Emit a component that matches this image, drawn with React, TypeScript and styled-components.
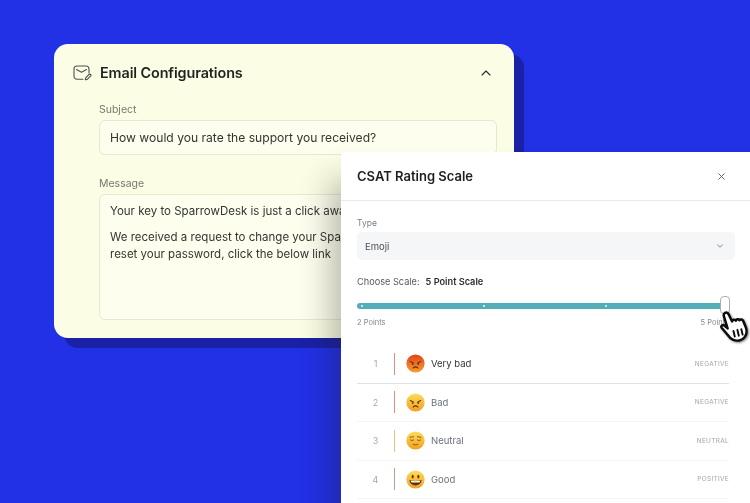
import { createGlobalStyle, styled } from "styled-components";
import { ChevronDown, ChevronUp, X } from "lucide-react";

const GlobalStyle = createGlobalStyle`
  html, body {
    margin: 0;
    padding: 0;
    background: #2230e6;
    font-family: "Inter", "Noto Sans", sans-serif;
  }
`;

const Page = styled.div`
  position: relative;
  width: 750px;
  height: 503px;
  overflow: hidden;
  padding: 44px 0 0 54px;
  box-sizing: border-box;
  background: #2230e6;
  filter: blur(0.35px);
`;

const ConfigCard = styled.section`
  width: 460px;
  height: 294px;
  box-sizing: border-box;
  padding: 20px 0 0 19px;
  background: #fbfde4;
  border-radius: 14px;
  box-shadow: 10px 10px 0 #1a21a6;
`;

const CardHeader = styled.header`
  display: flex;
  align-items: center;
  gap: 8px;
  height: 18px;
  padding-right: 20px;
  color: #2b2f2a;
`;

const CardTitle = styled.h2`
  flex: 1;
  margin: 0;
  font-size: 14.4px;
  line-height: 18px;
  font-weight: 600;
  letter-spacing: -0.1px;
  color: #1f2420;
`;

const Fields = styled.div`
  display: flex;
  flex-direction: column;
  padding: 21px 0 0 26px;
  margin-right: 17px;
`;

const FieldLabel = styled.label`
  font-size: 10.5px;
  line-height: 14px;
  color: #77796f;
  margin-bottom: 3px;
`;

const SubjectBox = styled.div`
  height: 35px;
  box-sizing: border-box;
  padding: 0 10px;
  margin-bottom: 22px;
  display: flex;
  align-items: center;
  background: #fdfeee;
  border: 1px solid #e6e8d2;
  border-radius: 6px;
  font-size: 12.1px;
  color: #33362f;
  white-space: nowrap;
`;

const MessageBox = styled.div`
  height: 126px;
  box-sizing: border-box;
  padding: 8px 10px;
  background: #fdfeee;
  border: 1px solid #e6e8d2;
  border-radius: 6px;
  font-size: 11.5px;
  line-height: 17.5px;
  color: #33362f;
  white-space: nowrap;
  overflow: hidden;
`;

const MessageLine = styled.p`
  margin: 0 0 8px;
`;

const Modal = styled.section`
  position: absolute;
  left: 341px;
  top: 152px;
  width: 440px;
  height: 380px;
  background: #fff;
  border-radius: 4px 0 0 0;
  box-shadow: -16px 22px 30px -6px rgba(30, 30, 20, 0.3);
`;

const ModalHeader = styled.header`
  height: 49px;
  box-sizing: border-box;
  display: flex;
  align-items: center;
  justify-content: space-between;
  padding: 0 54px 0 16px;
  border-bottom: 1px solid #e9eaec;
  color: #4d5058;
`;

const ModalTitle = styled.h2`
  margin: 0;
  font-size: 13px;
  font-weight: 600;
  color: #1d1f24;
`;

const ModalBody = styled.div`
  width: 378px;
  padding: 16px 0 0 16px;
`;

const TypeLabel = styled.div`
  font-size: 8.5px;
  line-height: 12px;
  color: #7a7d84;
  margin-bottom: 3px;
`;

const SelectBox = styled.div`
  height: 28px;
  box-sizing: border-box;
  display: flex;
  align-items: center;
  justify-content: space-between;
  padding: 0 10px 0 8px;
  background: #f5f6f7;
  border-radius: 5px;
  font-size: 9.5px;
  color: #4b4e55;
`;

const ScaleRow = styled.div`
  display: flex;
  gap: 6px;
  margin-top: 16px;
  font-size: 9.2px;
  line-height: 12px;
  color: #55585f;
`;

const ScaleValue = styled.strong`
  font-weight: 600;
  color: #2b2d33;
`;

const SliderTrack = styled.div`
  position: relative;
  width: 368px;
  height: 6px;
  margin-top: 15px;
  display: flex;
  align-items: center;
  gap: 120px;
  padding-left: 4px;
  box-sizing: border-box;
  background: #54aeb8;
  border-radius: 3px;
`;

const TrackTick = styled.span`
  width: 2px;
  height: 2px;
  border-radius: 50%;
  background: #e8fbfd;
`;

const SliderThumb = styled.span`
  position: absolute;
  right: -5px;
  top: -7px;
  width: 10px;
  height: 18px;
  background: #fff;
  border: 1px solid #a9adb3;
  border-radius: 4px;
  box-sizing: border-box;
`;

const ScaleEnds = styled.div`
  display: flex;
  justify-content: space-between;
  width: 372px;
  margin-top: 8px;
  font-size: 7.5px;
  line-height: 11px;
  color: #84878d;
`;

const CursorHand = styled.svg`
  position: absolute;
  left: 375px;
  top: 157px;
  filter: drop-shadow(1px 1px 1px rgba(0, 0, 0, 0.5));
`;

const RatingList = styled.div`
  width: 372px;
  margin: 17px 0 0 16px;
`;

const RatingRow = styled.div<{ $active?: boolean }>`
  height: 38.5px;
  box-sizing: border-box;
  display: flex;
  align-items: center;
  border-bottom: ${(p) => (p.$active ? "1.5px solid #dfe1e4" : "1px solid #f5f5f6")};
  color: ${(p) => (p.$active ? "#33353b" : "#6d7280")};
`;

const RatingIndex = styled.span`
  width: 37px;
  text-align: center;
  font-size: 9px;
  color: #a3a6ab;
`;

const Bar = styled.span<{ $color: string }>`
  width: 1px;
  height: 22px;
  margin-right: 11px;
  background: ${(p) => p.$color};
`;

const RatingName = styled.span`
  flex: 1;
  margin-left: 6px;
  font-size: 9.5px;
`;

const Sentiment = styled.span`
  font-size: 6.5px;
  font-weight: 400;
  letter-spacing: 0.3px;
  color: #a2a5aa;
`;

function MailEditIcon() {
  return (
    <svg width="19" height="16" viewBox="0 0 19 16" fill="none" stroke="#4d5350" strokeWidth="1.1" strokeLinecap="round" strokeLinejoin="round">
      <path d="M10 14.2H4a3 3 0 0 1-3-3V4a3 3 0 0 1 3-3h9a3 3 0 0 1 3 3v4" />
      <path d="M3.5 4.5 8.5 7.2l5-2.7" />
      <path d="m12.3 14.8.4-2 3.3-3.3a1.1 1.1 0 0 1 1.6 1.6l-3.3 3.3z" />
    </svg>
  );
}

function Face({ kind }: { kind: "veryBad" | "bad" | "neutral" | "good" }) {
  const id = `face-${kind}`;
  const top = kind === "veryBad" ? "#e2401a" : "#fcdc5c";
  const bottom = kind === "veryBad" ? "#f7a02e" : "#f2a01e";
  return (
    <svg width="19" height="19" viewBox="0 0 20 20">
      <defs>
        <linearGradient id={id} x1="0" y1="0" x2="0" y2="1">
          <stop offset="0" stopColor={top} />
          <stop offset="1" stopColor={bottom} />
        </linearGradient>
      </defs>
      <circle cx="10" cy="10" r="9.6" fill={`url(#${id})`} />
      {(kind === "veryBad" || kind === "bad") && (
        <g fill="none" stroke="#5a2c10" strokeLinecap="round">
          <path d="M4.5 8 8 9.6M15.5 8 12 9.6" strokeWidth="1.1" />
          <circle cx="7" cy="10.6" r="0.9" fill="#5a2c10" stroke="none" />
          <circle cx="13" cy="10.6" r="0.9" fill="#5a2c10" stroke="none" />
          <path d="M7.4 14.8c1.4-1.3 3.8-1.3 5.2 0" strokeWidth="1.1" />
        </g>
      )}
      {kind === "neutral" && (
        <g fill="none" stroke="#7a4a12" strokeLinecap="round" strokeWidth="0.9">
          <path d="M4.2 6.6 8 6M15.8 6.6 12 6" />
          <path d="M4.6 9.4c1 .8 2.4.8 3.4 0M12 9.4c1 .8 2.4.8 3.4 0" />
          <path d="M7.6 14c1.6.8 3.2.8 4.8 0" />
        </g>
      )}
      {kind === "good" && (
        <g>
          <ellipse cx="7" cy="7" rx="1.1" ry="1.9" fill="#5a3410" />
          <ellipse cx="13" cy="7" rx="1.1" ry="1.9" fill="#5a3410" />
          <path d="M3.6 10.6c4 1.2 8.8 1.2 12.8 0-.3 3.6-3 5.6-6.4 5.6s-6.1-2-6.4-5.6z" fill="#5a3410" />
          <path d="M5 11.2c3.2.7 6.8.7 10 0l-.4 1.6c-3 .6-6.2.6-9.2 0z" fill="#fff" />
        </g>
      )}
    </svg>
  );
}

const ratings = [
  { n: 1, name: "Very bad", kind: "veryBad", color: "#e0907a", tone: "NEGATIVE" },
  { n: 2, name: "Bad", kind: "bad", color: "#e0907a", tone: "NEGATIVE" },
  { n: 3, name: "Neutral", kind: "neutral", color: "#eec27e", tone: "NEUTRAL" },
  { n: 4, name: "Good", kind: "good", color: "#8fb98a", tone: "POSITIVE" },
] as const;

export default function App() {
  return (
    <Page>
      <GlobalStyle />
      <ConfigCard>
        <CardHeader>
          <MailEditIcon />
          <CardTitle>Email Configurations</CardTitle>
          <ChevronUp size={16} strokeWidth={1.7} />
        </CardHeader>
        <Fields>
          <FieldLabel>Subject</FieldLabel>
          <SubjectBox>How would you rate the support you received?</SubjectBox>
          <FieldLabel>Message</FieldLabel>
          <MessageBox>
            <MessageLine>Your key to SparrowDesk is just a click away</MessageLine>
            <div>We received a request to change your SparrowDesk password. To</div>
            <div>reset your password, click the below link</div>
          </MessageBox>
        </Fields>
      </ConfigCard>
      <Modal>
        <ModalHeader>
          <ModalTitle>CSAT Rating Scale</ModalTitle>
          <X size={11} strokeWidth={1.9} />
        </ModalHeader>
        <ModalBody>
          <TypeLabel>Type</TypeLabel>
          <SelectBox>
            Emoji
            <ChevronDown size={10} strokeWidth={1.9} color="#666970" />
          </SelectBox>
          <ScaleRow>
            Choose Scale: <ScaleValue>5 Point Scale</ScaleValue>
          </ScaleRow>
          <SliderTrack>
            <TrackTick />
            <TrackTick />
            <TrackTick />
            <SliderThumb />
          </SliderTrack>
          <ScaleEnds>
            <span>2 Points</span>
            <span>5 Points</span>
          </ScaleEnds>
        </ModalBody>
        <RatingList>
          {ratings.map((r) => (
            <RatingRow key={r.n} $active={r.n === 1}>
              <RatingIndex>{r.n}</RatingIndex>
              <Bar $color={r.color} />
              <Face kind={r.kind} />
              <RatingName>{r.name}</RatingName>
              <Sentiment>{r.tone}</Sentiment>
            </RatingRow>
          ))}
        </RatingList>
        <CursorHand width="36" height="36" viewBox="0 0 32 32">
          <path
            d="M8 3.5c1.4-.8 2.7 0 3.3 1.3l3 6.3c.2-1.7 2.4-2.2 3.3-.7.3-1.5 2.5-1.9 3.4-.4.5-1 2.4-1 3.1.4l2.3 5.6c1.4 3.5.9 6.6-1 9.2-2.3 3-6.8 3.5-10 2.3-2.5-1-3.7-2.4-5.3-4.8L5 16.6c-.9-1.5 1-3 2.4-1.9l2.9 2.5L7 6.3C6.6 5.1 7 4.1 8 3.5z"
            fill="#fff"
            stroke="#0c0c0c"
            strokeWidth="2.2"
            strokeLinejoin="round"
          />
          <path d="M15.5 19.5l1.2 5M19 18.5l1.3 5.2M22.5 18l1.2 4.8" stroke="#0c0c0c" strokeWidth="1.7" strokeLinecap="round" fill="none" />
        </CursorHand>
      </Modal>
    </Page>
  );
}
